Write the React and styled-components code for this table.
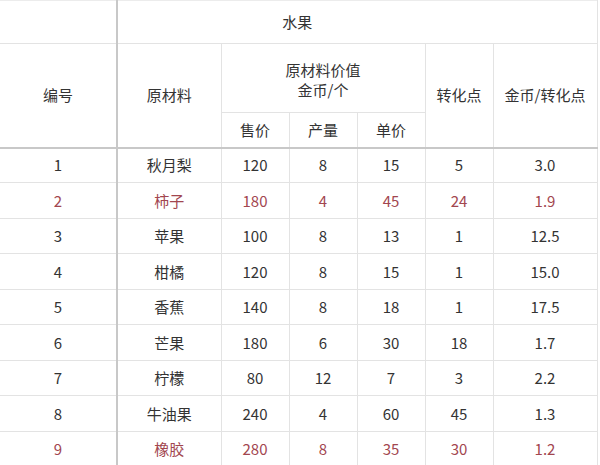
import React from 'react';
import styled, { createGlobalStyle } from 'styled-components';

const GlobalStyle = createGlobalStyle`
  html, body {
    margin: 0;
    padding: 0;
    background: #ffffff;
    overflow: hidden;
  }
  body {
    font-family: "Noto Sans CJK SC", "Noto Sans", sans-serif;
  }
`;

const widths = [117, 104, 68, 68, 68, 68, 104];

const rows = [
  { id: 1, name: '秋月梨', price: 120, qty: 8, unit: 15, points: 5, ratio: '3.0' },
  { id: 2, name: '柿子', price: 180, qty: 4, unit: 45, points: 24, ratio: '1.9', red: true },
  { id: 3, name: '苹果', price: 100, qty: 8, unit: 13, points: 1, ratio: '12.5' },
  { id: 4, name: '柑橘', price: 120, qty: 8, unit: 15, points: 1, ratio: '15.0' },
  { id: 5, name: '香蕉', price: 140, qty: 8, unit: 18, points: 1, ratio: '17.5' },
  { id: 6, name: '芒果', price: 180, qty: 6, unit: 30, points: 18, ratio: '1.7' },
  { id: 7, name: '柠檬', price: 80, qty: 12, unit: 7, points: 3, ratio: '2.2' },
  { id: 8, name: '牛油果', price: 240, qty: 4, unit: 60, points: 45, ratio: '1.3' },
  { id: 9, name: '橡胶', price: 280, qty: 8, unit: 35, points: 30, ratio: '1.2', red: true },
];

export default function App() {
  return (
    <React.Fragment>
      <GlobalStyle />
      <Sheet>
        <colgroup>
          {widths.map((w, i) => (
            <col key={i} style={{ width: w }} />
          ))}
        </colgroup>
        <thead>
          <Row $h={43}>
            <Cell $first $top />
            <Cell colSpan={6} $top $shift>水果</Cell>
          </Row>
          <Row $h={69}>
            <Cell rowSpan={2} $first $head>编号</Cell>
            <Cell rowSpan={2} $head>原材料</Cell>
            <Cell colSpan={3}>
              <TwoLine>
                <span>原材料价值</span>
                <span>金币/个</span>
              </TwoLine>
            </Cell>
            <Cell rowSpan={2} $head>转化点</Cell>
            <Cell rowSpan={2} $head>金币/转化点</Cell>
          </Row>
          <Row $h={35}>
            <Cell $head>售价</Cell>
            <Cell $head>产量</Cell>
            <Cell $head>单价</Cell>
          </Row>
        </thead>
        <tbody>
          {rows.map((r, i) => (
            <Row key={r.id} $h={i % 2 === 0 ? 35 : 36} $red={r.red}>
              <Cell $first>{r.id}</Cell>
              <Cell>{r.name}</Cell>
              <Cell>{r.price}</Cell>
              <Cell>{r.qty}</Cell>
              <Cell>{r.unit}</Cell>
              <Cell>{r.points}</Cell>
              <Cell>{r.ratio}</Cell>
            </Row>
          ))}
        </tbody>
      </Sheet>
    </React.Fragment>
  );
}

const Sheet = styled.table`
  border-collapse: collapse;
  table-layout: fixed;
  width: 597px;
  font-size: 15px;
  color: #333333;
`;

const Row = styled.tr`
  height: ${(p) => p.$h}px;
  color: ${(p) => (p.$red ? '#a2464f' : '#333333')};
`;

const Cell = styled.td`
  padding: 0;
  padding-right: ${(p) => (p.$shift ? '120px' : '0')};
  text-align: center;
  vertical-align: middle;
  line-height: 20px;
  white-space: nowrap;
  border: 1px solid #e3e3e3;
  border-top-color: ${(p) => (p.$top ? '#ececec' : '#e3e3e3')};
  border-left: ${(p) => (p.$first ? 'none' : '1px solid #e3e3e3')};
  border-right: ${(p) => (p.$first ? '2px solid #c8c8c8' : '1px solid #e3e3e3')};
  ${(p) => p.$head && 'border-bottom: 2px solid #c8c8c8;'}
  tbody tr:first-child & {
    border-top: 2px solid #c8c8c8;
  }
`;

const TwoLine = styled.div`
  display: flex;
  flex-direction: column;
  align-items: center;
  padding-top: 4px;
`;
